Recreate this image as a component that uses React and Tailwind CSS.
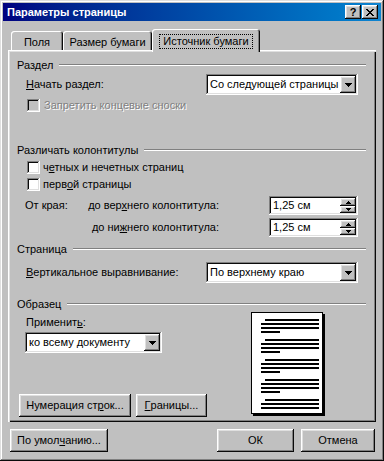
import React from 'react';

const raised =
  'shadow-[inset_-1px_-1px_#0a0a0a,inset_1px_1px_#ffffff,inset_-2px_-2px_#808080,inset_2px_2px_#dfdfdf]';
const sunken =
  'shadow-[inset_-1px_-1px_#ffffff,inset_1px_1px_#808080,inset_-2px_-2px_#dfdfdf,inset_2px_2px_#0a0a0a]';

function Arrow() {
  return (
    <svg width="7" height="4" viewBox="0 0 7 4" className="block">
      <path d="M0 0h7v1H0zM1 1h5v1H1zM2 2h3v1H2zM3 3h1v1H3z" fill="#000" />
    </svg>
  );
}

function Select({ value, w }) {
  return (
    <div className={`flex h-[21px] bg-white p-[2px] ${sunken} ${w}`}>
      <div className="flex flex-1 items-center pl-[2px] leading-[13px]">{value}</div>
      <div className={`flex w-[16px] items-center justify-center bg-[#c0c0c0] ${raised}`}>
        <Arrow />
      </div>
    </div>
  );
}

function Spin({ value }) {
  return (
    <div className={`flex h-[19px] w-[89px] bg-white p-[2px] ${sunken}`}>
      <div className="flex flex-1 items-center pl-[2px] leading-[13px]">{value}</div>
      <div className="flex w-[16px] flex-col">
        <div className={`flex h-[8px] items-center justify-center bg-[#c0c0c0] ${raised}`}>
          <svg width="5" height="3" viewBox="0 0 5 3" className="block">
            <path d="M2 0h1v1H2zM1 1h3v1H1zM0 2h5v1H0z" fill="#000" />
          </svg>
        </div>
        <div className={`flex h-[7px] items-center justify-center bg-[#c0c0c0] ${raised}`}>
          <svg width="5" height="3" viewBox="0 0 5 3" className="block">
            <path d="M0 0h5v1H0zM1 1h3v1H1zM2 2h1v1H2z" fill="#000" />
          </svg>
        </div>
      </div>
    </div>
  );
}

function Check({ children, disabled }) {
  return (
    <div className="mt-[4px] flex h-[13px] items-center pl-[10px]">
      <div className={`h-[13px] w-[13px] ${sunken} ${disabled ? 'bg-[#c0c0c0]' : 'bg-white'}`} />
      <span
        className={
          disabled
            ? 'ml-[4px] leading-[13px] text-[#808080] [text-shadow:1px_1px_0_#ffffff]'
            : 'ml-[3px] leading-[13px]'
        }
      >
        {children}
      </span>
    </div>
  );
}

function Group({ title, mt }) {
  return (
    <div className={`flex h-[14px] items-center ${mt}`}>
      <span className="leading-[13px]">{title}</span>
      <div className="ml-[6px] h-[2px] flex-1 border-t border-b border-t-[#808080] border-b-white" />
    </div>
  );
}

function Button({ children, w }) {
  return (
    <div className={`flex h-[23px] items-center justify-center bg-[#c0c0c0] leading-[13px] ${raised} ${w}`}>
      {children}
    </div>
  );
}

function Page() {
  const para = (n) => (
    <div className="flex flex-col gap-[2px]">
      <div className="ml-[13px] h-[2px] w-[54px] bg-black" />
      <div className="ml-[9px] h-[2px] w-[58px] bg-black" />
      <div className="ml-[9px] h-[2px] w-[58px] bg-black" />
      {n === 4 ? <div className="ml-[9px] h-[2px] w-[19px] bg-black" /> : null}
    </div>
  );
  return (
    <div className="mt-[1px] flex h-[102px] w-[72px] flex-col gap-[6px] overflow-hidden border border-black bg-white pt-[6px] shadow-[2px_2px_0_#000]">
      {para(4)}
      {para(4)}
      {para(4)}
      {para(4)}
      {para(3)}
    </div>
  );
}

export default function App() {
  return (
    <div
      className={`flex h-[461px] w-[384px] flex-col bg-[#c0c0c0] p-[3px] font-['Liberation_Sans',Arial,sans-serif] text-[11px] text-black shadow-[inset_-1px_-1px_#0a0a0a,inset_1px_1px_#dfdfdf,inset_-2px_-2px_#808080,inset_2px_2px_#ffffff]`}
    >
      {/* title bar */}
      <div className="flex h-[18px] items-center bg-gradient-to-r from-[#000080] to-[#1084d0] pl-[4px] pr-[3px]">
        <span className="font-bold leading-[13px] text-white">Параметры страницы</span>
        <div className="ml-auto flex gap-[1px]">
          <div className={`flex h-[14px] w-[16px] items-center justify-center bg-[#c0c0c0] text-[11px] font-bold leading-none ${raised}`}>
            ?
          </div>
          <div className={`flex h-[14px] w-[16px] items-center justify-center bg-[#c0c0c0] ${raised}`}>
            <svg width="8" height="7" viewBox="0 0 8 7" className="block">
              <path d="M0 0h2v1h1v1h2V1h1V0h2v1H7v1H6v1H5v1h1v1h1v1h1v1H6V6H5V5H3v1H2v1H0V6h1V5h1V4h1V3H2V2H1V1H0z" fill="#000" />
            </svg>
          </div>
        </div>
      </div>

      {/* tabs */}
      <div className="mt-[8px] flex h-[21px] items-end pl-[8px]">
        <div className={`h-[19px] w-[52px] rounded-t-[3px] bg-[#c0c0c0] pt-[5px] text-center leading-[13px] shadow-[inset_1px_1px_#ffffff,inset_-1px_0_#0a0a0a,inset_-2px_0_#808080]`}>
          Поля
        </div>
        <div className={`h-[19px] w-[89px] rounded-t-[3px] bg-[#c0c0c0] pt-[5px] text-center leading-[13px] shadow-[inset_1px_1px_#ffffff,inset_-1px_0_#0a0a0a,inset_-2px_0_#808080]`}>
          Размер бумаги
        </div>
        <div className="relative z-10 flex h-[23px] w-[108px] self-start justify-center rounded-t-[3px] bg-[#c0c0c0] pt-[5px] shadow-[inset_1px_1px_#ffffff,inset_-1px_0_#0a0a0a,inset_-2px_0_#808080]">
          <span className="h-[15px] border border-dotted border-black px-[3px] leading-[13px]">Источник бумаги</span>
        </div>
      </div>

      {/* panel */}
      <div className="mx-[5px] flex h-[372px] flex-col bg-[#c0c0c0] pl-[9px] pr-[10px] shadow-[inset_1px_1px_#ffffff,inset_2px_2px_#dfdfdf,inset_-1px_-1px_#0a0a0a,inset_-2px_-2px_#808080]">
        <Group title="Раздел" mt="mt-[8px]" />
        <div className="mt-[2px] flex h-[21px] items-center pl-[9px] pr-[8px]">
          <span className="leading-[13px]">
            <u>Н</u>ачать раздел:
          </span>
          <div className="ml-auto">
            <Select value="Со следующей страницы" w="w-[152px]" />
          </div>
        </div>
        <Check disabled>Запретить концевые сноски</Check>

        <Group title="Различать колонтитулы" mt="mt-[31px]" />
        <Check>
          ч<u>е</u>тных и нечетных страниц
        </Check>
        <Check>
          перв<u>о</u>й страницы
        </Check>
        <div className="mt-[5px] flex h-[19px] items-center pl-[8px] pr-[8px]">
          <div className="flex w-[194px] justify-between leading-[13px]">
            <span>От края:</span>
            <span>
              до вер<u>х</u>него колонтитула:
            </span>
          </div>
          <div className="ml-auto">
            <Spin value="1,25 см" />
          </div>
        </div>
        <div className="mt-[3px] flex h-[19px] items-center pl-[8px] pr-[8px]">
          <div className="flex w-[194px] justify-end leading-[13px]">
            <span>
              до ни<u>ж</u>него колонтитула:
            </span>
          </div>
          <div className="ml-auto">
            <Spin value="1,25 см" />
          </div>
        </div>

        <Group title="Страница" mt="mt-[5px]" />
        <div className="mt-[6px] flex h-[21px] items-center pl-[9px] pr-[8px]">
          <span className="leading-[13px]">
            <u>В</u>ертикальное выравнивание:
          </span>
          <div className="ml-auto">
            <Select value="По верхнему краю" w="w-[152px]" />
          </div>
        </div>

        <Group title="Образец" mt="mt-[14px]" />
        <div className="flex">
          <div className="flex w-[234px] flex-col">
            <div className="mt-[5px] h-[14px] pl-[9px] leading-[13px]">
              Применит<u>ь</u>:
            </div>
            <div className="mt-[2px] pl-[8px]">
              <Select value="ко всему документу" w="w-[137px]" />
            </div>
            <div className="mt-[41px] flex gap-[5px] pl-[2px]">
              <Button w="w-[112px]">
                Нумерация ст<u>р</u>ок...
              </Button>
              <Button w="w-[71px]">
                <u>Г</u>раницы...
              </Button>
            </div>
          </div>
          <Page />
        </div>
      </div>

      {/* bottom buttons */}
      <div className="mt-[7px] flex pl-[7px]">
        <Button w="w-[98px]">
          По умол<u>ч</u>анию...
        </Button>
        <div className="ml-auto flex gap-[7px] pr-[6px]">
          <Button w="w-[77px]">ОК</Button>
          <Button w="w-[74px]">Отмена</Button>
        </div>
      </div>
    </div>
  );
}
